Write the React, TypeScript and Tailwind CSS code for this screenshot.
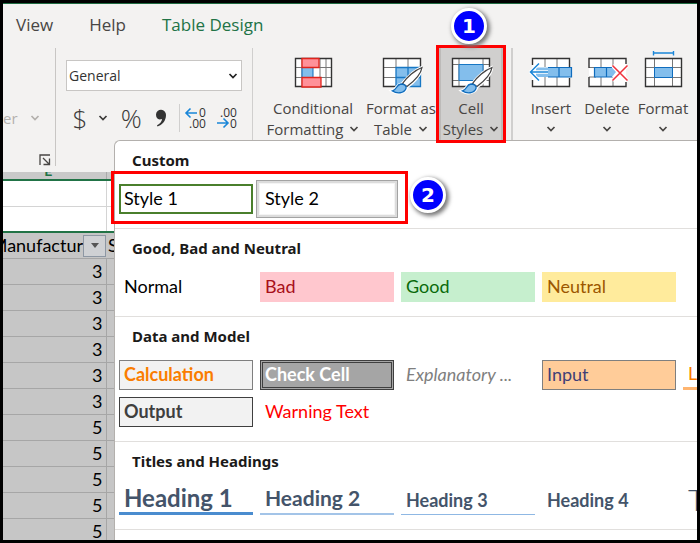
import type { ReactNode } from "react";
import clsx from "clsx";

const ui = "font-['Open_Sans','Noto_Sans',sans-serif]";
const calibri = "font-['Lato','Open_Sans',sans-serif]";

const rows = [3, 3, 3, 3, 3, 3, 5, 5, 5, 5, 5];

type CellStyle = { name: string; className: string; size?: string };

const sections: { title: string; styles: CellStyle[] }[] = [
  {
    title: "Custom",
    styles: [
      { name: "Style 1", className: "border-2 border-[#4a7f2c] px-[3px] text-black" },
      { name: "Style 2", className: "px-[5px] text-black shadow-[0_0_0_1px_#f4f4f4,0_0_0_3px_#dcdcdc,0_0_0_4px_#a3a3a3]" },
    ],
  },
  {
    title: "Good, Bad and Neutral",
    styles: [
      { name: "Normal", className: "px-[5px] text-black" },
      { name: "Bad", className: "bg-[#ffc7ce] px-[5px] text-[#a8101a]" },
      { name: "Good", className: "bg-[#c6efce] px-[5px] text-[#0a6a0a]" },
      { name: "Neutral", className: "bg-[#ffeb9c] px-[5px] text-[#9c5700]" },
    ],
  },
  {
    title: "Data and Model",
    styles: [
      { name: "Calculation", className: "border border-[#7f7f7f] bg-[#f2f2f2] px-1 font-bold text-[#fa7d00]" },
      {
        name: "Check Cell",
        className: "border-3 border-double border-[#3f3f3f] bg-[#a5a5a5] px-0.5 font-bold text-white",
      },
      { name: "Explanatory ...", className: "px-[5px] italic text-[#7f7f7f]" },
      { name: "Input", className: "border border-[#7f7f7f] bg-[#ffcc99] px-1 text-[#3f3f76]" },
      { name: "Linked Cell", className: "border-b-3 border-[#ffb570] px-[5px] text-[#fa7d00]" },
      { name: "Output", className: "border border-[#3f3f3f] bg-[#f2f2f2] px-1 font-bold text-[#3f3f3f]" },
      { name: "Warning Text", className: "px-[5px] text-[#ff0000]" },
    ],
  },
  {
    title: "Titles and Headings",
    styles: [
      {
        name: "Heading 1",
        className: "border-b-3 border-[#4a8ccf] px-[5px] font-bold text-[#44546a]",
        size: "text-2xl leading-6",
      },
      {
        name: "Heading 2",
        className: "border-b-2 border-[#a3c4e8] px-[5px] font-bold text-[#44546a]",
        size: "text-[21px] leading-6",
      },
      { name: "Heading 3", className: "border-b border-[#8fb8e4] px-[5px] pt-0.5 font-bold text-[#44546a]" },
      { name: "Heading 4", className: "px-[5px] pt-0.5 font-bold text-[#44546a]" },
      { name: "Title", className: "px-[5px] font-light text-[#44546a]", size: "text-3xl leading-6" },
    ],
  },
];

function Chevron({ className }: { className?: string }) {
  return (
    <svg viewBox="0 0 10 8" className={clsx("h-2 w-2.5 shrink-0", className)} fill="none" aria-hidden="true">
      <path d="M1.5 2 5 5.500 8.500 2" stroke="currentColor" strokeWidth="1.700" />
    </svg>
  );
}

function Brush() {
  return (
    <g>
      <path
        d="M43 19.500C36 22 28 30 23 36c-5 0-6 6-10 7 6 4 14 1 15-4C34 35 42 27 43 19.500Z"
        fill="#fff"
        stroke="#fff"
        strokeWidth="3"
      />
      <path d="M23.500 35.500C28 29 36 22 43 19.500 42 26 34 34 28 38.500Z" fill="#fff" stroke="#444" strokeWidth="1.300" />
      <path
        d="M13.500 43C18 42 17 36.500 22 36c3 0 6 2 5 4.500C25 45.500 18 46 13.500 43Z"
        fill="#83beec"
        stroke="#0f6cbd"
        strokeWidth="1.300"
      />
    </g>
  );
}

function ConditionalIcon() {
  return (
    <>
      <path d="M4.500 10.500h36v28h-36z" fill="#fff" />
      <path d="M11 10v29M29 10v29M35 10v29M4 19.500h37M4 29.500h37" stroke="#777" />
      <path d="M4.500 10.500h36v28h-36z" stroke="#333" strokeWidth="1.400" />
      <path d="M11 19.500h11v10H11z" fill="#83beec" stroke="#0f6cbd" />
      <path d="M11 10.500h17v9H11zM11 29.500h19v9.500H11z" fill="#ff9199" stroke="#e0241c" strokeWidth="1.300" />
    </>
  );
}

function FormatTableIcon() {
  return (
    <>
      <path d="M4.500 10.500h37v28h-37z" fill="#fff" />
      <path d="M17 19.500h24v19H17z" fill="#83beec" />
      <path d="M17 10v9M29 10v9M4 19.500h13M4 29.500h13" stroke="#777" />
      <path d="M41.500 19.500V10.500h-37v28H17" stroke="#333" strokeWidth="1.400" />
      <path d="M17 39V19.500h24.500v19H17M29 19.500v19M17 29.500h24" stroke="#1777c4" strokeWidth="1.300" />
      <Brush />
    </>
  );
}

function CellStylesIcon() {
  return (
    <>
      <path d="M3.500 10.500h37v28h-37z" fill="#fff" />
      <path d="M10 10v29M34 10v29M3 16.500h37M3 32.500h37" stroke="#777" />
      <path d="M3.500 10.500h37v28h-37z" stroke="#333" strokeWidth="1.400" />
      <path d="M10 16.500h24v16H10z" fill="#83beec" stroke="#1777c4" />
      <Brush />
    </>
  );
}

function InsertIcon() {
  return (
    <>
      <path d="M3.500 10.500h37v28h-37z" fill="#fff" />
      <path d="M16 10v9M28 10v9M16 29v9M28 29v9" stroke="#777" />
      <path d="M3.500 17v-6.500h37V19M3.500 32v6.500h37V30" stroke="#333" strokeWidth="1.400" />
      <path d="M7 19.500h35.500v9.500H7z" fill="#83beec" />
      <path d="M19 19.500h23.500v9.500H19M30 19.500v9.500" stroke="#0f6cbd" strokeWidth="1.200" />
      <path d="M19 24H2M10 15.500 1.500 24l8.500 8.500" stroke="#fff" strokeWidth="3.500" />
      <path d="M19 24H2M10 15.500 1.500 24l8.500 8.500" stroke="#1a86d8" strokeWidth="1.500" />
    </>
  );
}

function DeleteIcon() {
  return (
    <>
      <path d="M4 10.500h37v28H4z" fill="#fff" />
      <path d="M16 10v9M28 10v9M16 29v9M28 29v9M4 29h7M4 19.500h7" stroke="#777" />
      <path d="M4 20v-9.500h37V16M4 29v9.500h37V34" stroke="#333" strokeWidth="1.400" />
      <path d="M9.500 19.500H27l4 4.500-4 5H9.500z" fill="#83beec" />
      <path d="M27 19.500H9.500V29H27M21.500 19.500V29" stroke="#0f6cbd" strokeWidth="1.200" />
      <path d="m27.500 17.500 15 15M42.500 17.500l-15 15" stroke="#fff" strokeWidth="3.500" />
      <path d="m27.500 17.500 15 15M42.500 17.500l-15 15" stroke="#f0323c" strokeWidth="1.500" />
    </>
  );
}

function FormatIcon() {
  return (
    <>
      <path d="M4.500 10.500h36v28h-36z" fill="#fff" />
      <path d="M13.500 10v29M31.500 10v29M4 19.500h37M4 29.500h37" stroke="#777" />
      <path d="M4.500 10.500h36v28h-36z" stroke="#333" strokeWidth="1.400" />
      <path d="M13.500 19.500h18v10h-18z" fill="#83beec" stroke="#0f6cbd" />
      <path d="M12.500 5h20M12.500 3v4.500M32.500 3v4.500" stroke="#1a86d8" strokeWidth="1.400" />
    </>
  );
}

function RibbonButton({ lines, icon, className }: { lines: string[]; icon: ReactNode; className?: string }) {
  return (
    <button
      type="button"
      className={clsx("flex shrink-0 flex-col items-center text-[15px] leading-5 whitespace-nowrap", className)}
    >
      <svg viewBox="0 0 44 50" className="h-[50px] w-11" fill="none" aria-hidden="true">
        {icon}
      </svg>
      <span>{lines[0]}</span>
      <span className="flex h-[22px] items-center gap-1.5">
        {lines[1]}
        <Chevron />
      </span>
    </button>
  );
}

function Badge({ label, className }: { label: string; className: string }) {
  return (
    <span
      className={clsx(
        "absolute z-20 flex size-9 items-center justify-center rounded-full border-3 border-white bg-[#0000fe] font-['DejaVu_Sans',sans-serif] text-xl font-bold text-white shadow-[2px_2px_4px_1px_#777]",
        className,
      )}
    >
      {label}
    </span>
  );
}

function Ribbon() {
  return (
    <header className="h-[169px] shrink-0 border-t border-[#1f6b41] bg-[#f3f2f1] text-[#484644]">
      <nav className="flex h-[42px] items-center gap-9 pl-[13px] text-[17px]">
        <a href="#view">View</a>
        <a href="#help">Help</a>
        <a href="#table-design" className="text-[#217346]">
          Table Design
        </a>
      </nav>

      <div className="flex pt-0.5">
        <section className="flex h-[118px] w-[53px] shrink-0 flex-col justify-between border-r border-[#c8c6c4] pt-[60px]">
          <button type="button" className="flex items-center gap-3 text-[15px] leading-5 text-[#b3b0ad]">
            er
            <Chevron />
          </button>
          <button type="button" aria-label="Alignment settings" className="mr-1 self-end">
            <svg viewBox="0 0 12 12" className="size-3" fill="none" stroke="#484644" strokeWidth="1.300">
              <path d="M1 11V1h10M4 4l6 6M10.500 4.500v6h-6" />
            </svg>
          </button>
        </section>

        <section className="flex w-[197px] shrink-0 flex-col gap-[11px] border-r border-[#d0cfce] px-2.5 pt-3">
          <div className="relative">
            <select
              aria-label="Number format"
              className="h-[31px] w-full appearance-none border border-[#c8c6c4] bg-white px-0.5 text-sm text-[#333]"
            >
              <option>General</option>
            </select>
            <Chevron className="pointer-events-none absolute top-3 right-1 text-[#222]" />
          </div>
          <div className="flex h-8 items-center text-[#3b3a39]">
            <button type="button" aria-label="Currency" className="w-7 text-center text-[26px] leading-8 font-light">
              $
            </button>
            <button type="button" aria-label="Currency options" className="ml-1 w-4">
              <Chevron />
            </button>
            <button type="button" aria-label="Percent" className="w-9 text-center text-[26px] leading-8 font-light">
              %
            </button>
            <button type="button" aria-label="Comma style" className="w-6">
              <svg viewBox="0 0 24 24" className="size-6" fill="#333" aria-hidden="true">
                <path d="M7 8.500A5 5 0 0 1 17 9c0 6-4 10-8.500 11.500l-.5-1.200c3-1.500 5-4 5-6.300C9 14.500 7 12 7 8.500Z" />
              </svg>
            </button>
            <span className="mr-1 ml-1.5 h-7 w-px bg-[#d0cfce]" />
            <button type="button" aria-label="Increase decimal" className="w-[30px]">
              <svg viewBox="2 0 30 28" className="h-7 w-[30px]" fill="none" aria-hidden="true">
                <text x="17" y="13" fill="#333" fontSize="12">0</text>
                <text x="7" y="24" fill="#333" fontSize="12">.00</text>
                <path d="M15 9H4M8.500 4.500 4 9l4.500 4.500" stroke="#1a86d8" strokeWidth="1.600" />
              </svg>
            </button>
            <button type="button" aria-label="Decrease decimal" className="w-7">
              <svg viewBox="0 0 28 28" className="size-7" fill="none" aria-hidden="true">
                <text x="6" y="13" fill="#333" fontSize="12">.00</text>
                <text x="16" y="24" fill="#333" fontSize="12">0</text>
                <path d="M3 19h11M9.500 14.500 14 19l-4.500 4.500" stroke="#1a86d8" strokeWidth="1.600" />
              </svg>
            </button>
          </div>
        </section>

        <section className="flex h-[92px] w-[260px] shrink-0 border-r-2 border-[#d0cfce] pl-2.5">
          <RibbonButton lines={["Conditional", "Formatting"]} icon={<ConditionalIcon />} className="w-[100px]" />
          <RibbonButton lines={["Format as", "Table"]} icon={<FormatTableIcon />} className="w-[76px]" />
          <div className="relative">
            <RibbonButton
              lines={["Cell", "Styles"]}
              icon={<CellStylesIcon />}
              className="w-16 border-x-2 border-[#bdbbb9] bg-[#d0cfce]"
            />
            <span className="pointer-events-none absolute -inset-x-[3px] -inset-y-[3px] z-20 border-3 border-[#ff0000]" />
            <Badge label="1" className="-top-10 left-3" />
          </div>
        </section>

        <section className="flex h-[92px] min-w-0 flex-1 pl-2.5">
          <RibbonButton lines={["Insert"]} icon={<InsertIcon />} className="w-14" />
          <RibbonButton lines={["Delete"]} icon={<DeleteIcon />} className="w-14" />
          <RibbonButton lines={["Format"]} icon={<FormatIcon />} className="w-14" />
        </section>
      </div>
    </header>
  );
}

function Sheet() {
  return (
    <table className={clsx("w-full table-fixed border-collapse bg-[#c6c6c6] text-black", calibri)}>
      <colgroup>
        <col className="w-[103px]" />
        <col />
      </colgroup>
      <thead>
        <tr className="border-b-2 border-[#217346] bg-[#c9c9c9]">
          <th className="border-r border-[#aaa] p-0">
            <div className="flex h-[7px] items-end justify-center overflow-hidden pr-3 pb-[3px] text-sm leading-[10px] text-[#217346]">
              E
            </div>
          </th>
          <th className="p-0" />
        </tr>
      </thead>
      <tbody>
        <tr className="h-[26px] border-b border-[#d4d4d4] bg-white">
          <td className="border-r border-[#d4d4d4]" />
          <td />
        </tr>
        <tr className="h-[26px] border-b-2 border-[#217346] bg-white">
          <td className="border-r border-[#d4d4d4]" />
          <td />
        </tr>
        <tr className="h-[26px] border-b border-[#a6a6a6] text-lg leading-[25px]">
          <td className="p-0">
            <div className="flex items-center justify-end overflow-hidden">
              <span>Manufactur</span>
              <button
                type="button"
                aria-label="Filter Manufacturer"
                className="flex h-[22px] w-[23px] shrink-0 items-center justify-center border border-[#8d97a3] bg-[#cfd1d4]"
              >
                <svg viewBox="0 0 8 5" className="h-[5px] w-2" fill="#555" aria-hidden="true">
                  <path d="M0 0h8L4 5z" />
                </svg>
              </button>
            </div>
          </td>
          <td className="px-0.5 py-0">S</td>
        </tr>
        {rows.map((value, i) => (
          <tr key={i} className="h-[26px] border-b border-[#a6a6a6] text-lg leading-[25px]">
            <td className="border-r border-[#a6a6a6] py-0 pr-[3px] pl-0 text-right">{value}</td>
            <td />
          </tr>
        ))}
      </tbody>
    </table>
  );
}

function StylesMenu() {
  return (
    <div className="absolute top-[137px] right-0 bottom-0 left-[111px] z-10 overflow-hidden rounded-tl-md border-t border-l border-[#b3b0ad] bg-white">
      {sections.map((section) => (
        <section key={section.title} className="border-b border-[#e1dfdd] pb-3.5 pl-1">
          <h2 className="flex h-[43px] items-start px-[13px] pt-[7px] font-['Noto_Sans','Open_Sans',sans-serif] text-[15px] leading-6 font-bold text-[#1b1a19]">
            {section.title}
          </h2>
          <div className="grid grid-cols-[repeat(5,134px)] gap-[7px]">
            {section.styles.map((style) => (
              <button
                key={style.name}
                type="button"
                className={clsx(
                  "flex h-[30px] items-center pb-0.5 whitespace-nowrap",
                  calibri,
                  style.size ?? "text-lg leading-6",
                  style.className,
                )}
              >
                {style.name}
              </button>
            ))}
          </div>
        </section>
      ))}
    </div>
  );
}

export default function App() {
  return (
    <main className={clsx("relative flex h-screen flex-col overflow-hidden border-3 border-black bg-white", ui)}>
      <Ribbon />
      <Sheet />
      <StylesMenu />
      <span className="pointer-events-none absolute top-[168px] left-[108px] z-20 h-[53px] w-[297px] border-3 border-[#ff0000]" />
      <Badge label="2" className="top-[174px] left-[407px]" />
    </main>
  );
}
